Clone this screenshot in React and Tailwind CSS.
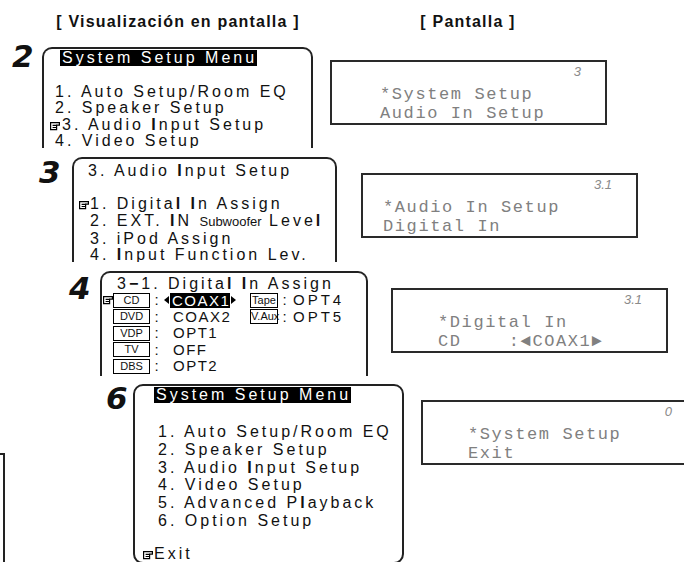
const B = ({ children }) => <b className="font-bold">{children}</b>;

// small pointing-hand mark used by the menus
const Ptr = ({ className = "" }) => (
  <span className={`inline-flex items-center align-[-1px] ${className}`}>
    <svg width="10" height="10" viewBox="0 0 10 10" fill="none" stroke="black" strokeWidth="1.2">
      <path d="M0.6 1.6H9.4V4.2H6.6V8.6H0.6Z" />
      <path d="M2.6 4.4H6.4M2.6 6.5H6.4" />
    </svg>
  </span>
);

const Num = ({ children, className = "" }) => (
  <div className={`shrink-0 font-['DejaVu_Sans',sans-serif] font-bold italic text-[31px] leading-none ${className}`}>
    {children}
  </div>
);

const Lcd = ({ num, lines, className = "", inset = "" }) => (
  <div className={`shrink-0 w-[277px] h-[65px] border-2 border-[#2a2a2a] ${className}`}>
    <div className="h-[16px] mt-[2px] pr-[24px] text-right italic text-[13px] leading-[16px] text-[#8a8a8a]">
      {num}
    </div>
    <div className={`mt-[5px] font-['Liberation_Mono',monospace] text-[17px] leading-[19px] tracking-[1.6px] text-[#808080] whitespace-pre ${inset}`}>
      {lines.map((l) => (
        <div key={l}>{l}</div>
      ))}
    </div>
  </div>
);

const Tag = ({ children, className = "" }) => (
  <div className={`shrink-0 h-[15px] border border-black text-[11px] leading-[13px] text-center tracking-normal ${className}`}>
    {children}
  </div>
);

const Arrow = ({ dir }) => (
  <svg width="7" height="10" viewBox="0 0 7 10" className="shrink-0">
    {dir === "l" ? <polygon points="6,1 6,9 1,5" fill="black" /> : <polygon points="1,1 1,9 6,5" fill="black" />}
  </svg>
);

export default function App() {
  return (
    <div className="w-[684px] h-[562px] overflow-hidden bg-white text-[#111] font-['Liberation_Sans',Arial,sans-serif]">
      {/* headings */}
      <div className="flex h-[47px] text-[16px] font-bold tracking-[1.2px] leading-[20px]">
        <div className="w-[356px] pt-[12px] text-center">[ Visualización en pantalla ]</div>
        <div className="w-[224px] pt-[12px] text-center">[ Pantalla ]</div>
      </div>

      {/* step 2 */}
      <div className="flex items-start h-[103px] pl-[12px]">
        <Num className="w-[30px] -mt-[6px]">2</Num>
        <div className="shrink-0 w-[271px] h-[101px] border-2 border-b-0 border-[#222] rounded-t-[10px] overflow-hidden pt-[1px] text-[16px] tracking-[3px]">
          <div className="flex">
            <div className="ml-[16px] bg-black text-white h-[16px] leading-[16px] pl-[2px]">System Setup Menu</div>
          </div>
          <div className="mt-[18px] pl-[11px] leading-[16.3px] whitespace-nowrap">
            <div>1. Auto Setup/Room EQ</div>
            <div>2. Speaker Setup</div>
            <div>
              <Ptr className="w-[12px] -ml-[5px]" />3. Audio <B>I</B>nput Setup
            </div>
            <div>4. Video Setup</div>
          </div>
        </div>
        <Lcd className="ml-[17px] mt-[13px]" inset="pl-[48px]" num="3" lines={["*System Setup", "Audio In Setup"]} />
      </div>

      {/* step 3 */}
      <div className="flex items-start mt-[7px] h-[105px] pl-[39px]">
        <Num className="w-[33px]">3</Num>
        <div className="shrink-0 w-[265px] h-[105px] border-2 border-b-0 border-[#222] rounded-t-[10px] overflow-hidden pt-[3px] text-[16px] tracking-[3px] whitespace-nowrap">
          <div className="pl-[14px] leading-[17px]">
            3. Audio <B>I</B>nput Setup
          </div>
          <div className="mt-[17px] pl-[16px] leading-[16.8px]">
            <div>
              <Ptr className="w-[11px] -ml-[11px]" />1. Digita<B>l</B> <B>I</B>n Assign
            </div>
            <div>
              2. EXT. <B>I</B>N <span className="text-[13px] tracking-normal">Subwoofer</span> Leve<B>l</B>
            </div>
            <div>3. iPod Assign</div>
            <div>
              4. <B>I</B>nput Function Lev.
            </div>
          </div>
        </div>
        <Lcd className="ml-[24px] mt-[16px]" inset="pl-[20px]" num="3.1" lines={["*Audio In Setup", "Digital In"]} />
      </div>

      {/* step 4 */}
      <div className="flex items-start mt-[9px] h-[105px] pl-[69px]">
        <Num className="w-[31px] mt-[2px]">4</Num>
        <div className="shrink-0 w-[268px] h-[105px] border-2 border-b-0 border-[#222] rounded-t-[10px] overflow-hidden pt-[2px] whitespace-nowrap">
          <div className="pl-[15px] leading-[17px] text-[16px] tracking-[3px]">
            3<B>−</B>1. Digita<B>l</B> <B>I</B>n Assign
          </div>
          <div className="pl-[1px] text-[15px] tracking-[1.5px] leading-[16px]">
            {[
              ["CD", "COAX1", "Tape", "OPT4"],
              ["DVD", "COAX2", "V.Aux", "OPT5"],
              ["VDP", "OPT1"],
              ["TV", "OFF"],
              ["DBS", "OPT2"],
            ].map(([tag, val, tag2, val2], i) => (
              <div key={tag} className="flex items-center h-[16.5px]">
                <div className="w-[10px] shrink-0 flex items-center">{i === 0 && <Ptr />}</div>
                <Tag className="w-[37px]">{tag}</Tag>
                <div className="w-[13px] shrink-0 text-center tracking-normal">:</div>
                <div className="w-[7px] shrink-0 flex items-center">{i === 0 && <Arrow dir="l" />}</div>
                <div className="w-[60px] shrink-0 flex">
                  {i === 0 ? (
                    <span className="bg-black text-white pl-[2px] h-[15px] leading-[15px]">{val}</span>
                  ) : (
                    <span className="pl-[3px]">{val}</span>
                  )}
                </div>
                <div className="w-[7px] shrink-0 flex items-center">{i === 0 && <Arrow dir="r" />}</div>
                {tag2 && (
                  <>
                    <div className="w-[13px] shrink-0" />
                    <Tag className="w-[28px] text-[10px] tracking-[-0.4px]">{tag2}</Tag>
                    <div className="w-[13px] shrink-0 text-center tracking-normal">:</div>
                    <span className="pl-[2px] tracking-[3px]">{val2}</span>
                  </>
                )}
              </div>
            ))}
          </div>
        </div>
        <Lcd className="ml-[23px] mt-[17px]" inset="pl-[45px]" num="3.1" lines={["*Digital In", "CD    :◄COAX1►"]} />
      </div>

      {/* step 6 */}
      <div className="flex items-start mt-[8px] h-[178px]">
        <div className="shrink-0 w-[5px] h-[112px] mt-[69px] border-t-2 border-r-2 border-[#222]" />
        <Num className="ml-[101px] w-[27px] -mt-[1px]">6</Num>
        <div className="shrink-0 w-[271px] h-[180px] border-2 border-[#222] rounded-[10px] overflow-hidden pt-[1px] text-[16px] tracking-[3px] whitespace-nowrap">
          <div className="flex">
            <div className="ml-[19px] bg-black text-white h-[16px] leading-[16px] pl-[2px]">System Setup Menu</div>
          </div>
          <div className="mt-[20px] pl-[23px] leading-[17.8px]">
            <div>1. Auto Setup/Room EQ</div>
            <div>2. Speaker Setup</div>
            <div>
              3. Audio <B>I</B>nput Setup
            </div>
            <div>4. Video Setup</div>
            <div>
              5. Advanced P<B>l</B>ayback
            </div>
            <div>6. Option Setup</div>
          </div>
          <div className="mt-[15px] pl-[8px] leading-[17.8px]">
            <Ptr className="w-[11px]" />Exit
          </div>
        </div>
        <Lcd className="ml-[17px] mt-[16px]" inset="pl-[45px]" num="0" lines={["*System Setup", "Exit"]} />
      </div>
    </div>
  );
}
